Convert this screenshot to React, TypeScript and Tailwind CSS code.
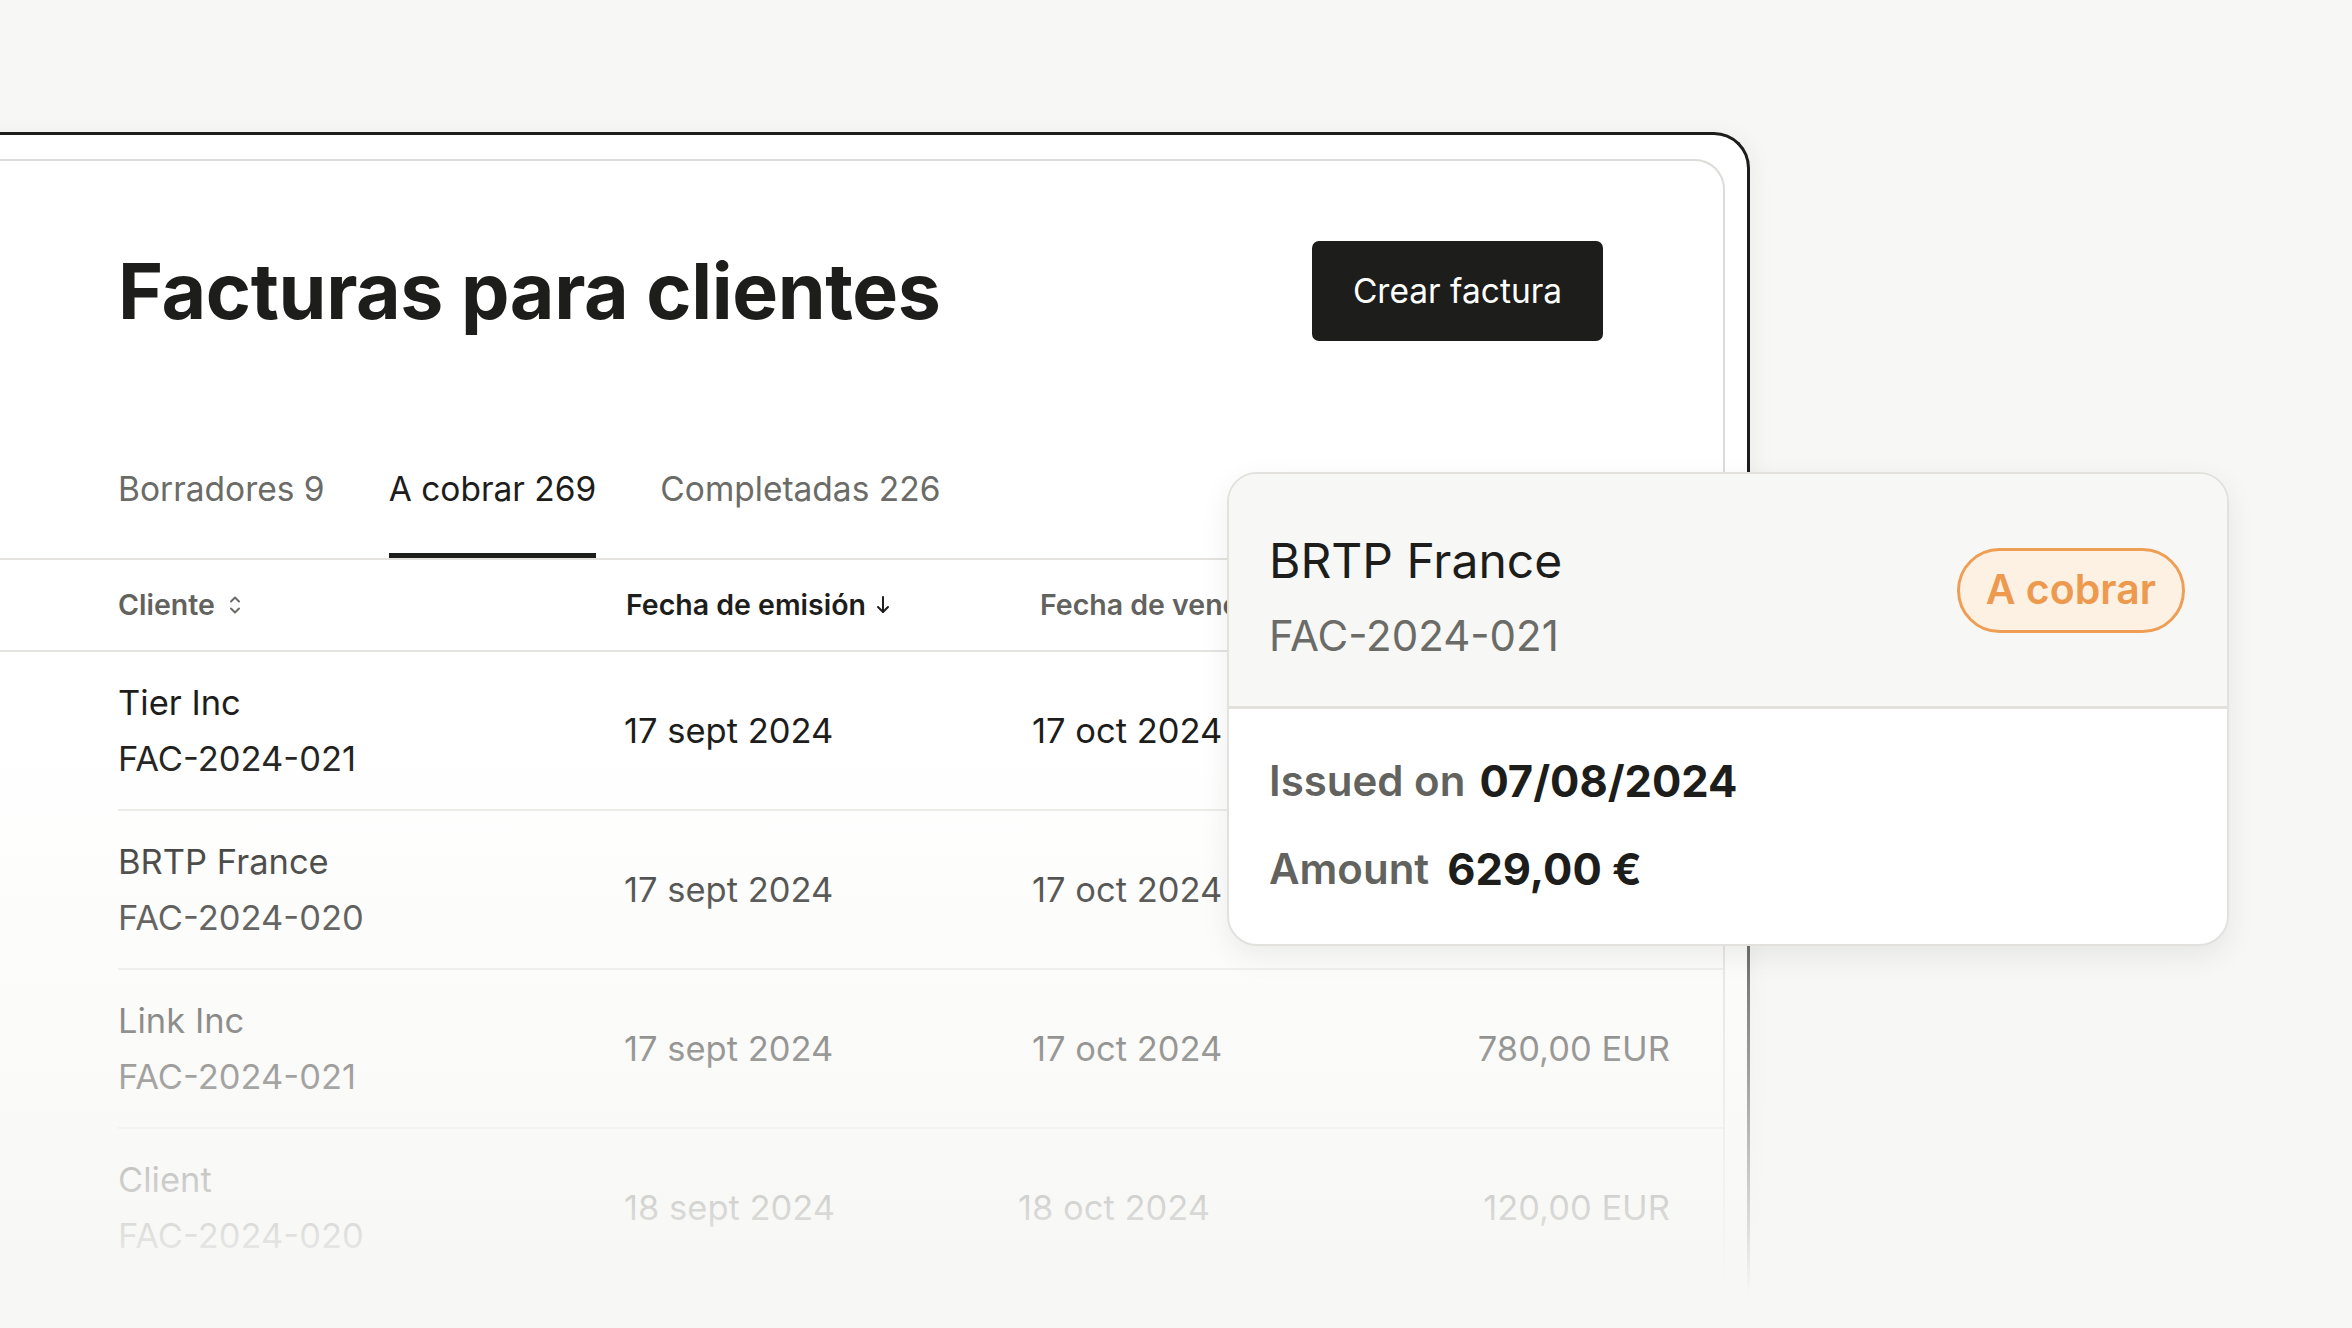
const rows = [
  { name: 'Tier Inc', id: 'FAC-2024-021', issued: '17 sept 2024', due: '17 oct 2024', amount: '1 250,00 EUR' },
  { name: 'BRTP France', id: 'FAC-2024-020', issued: '17 sept 2024', due: '17 oct 2024', amount: '629,00 EUR' },
  { name: 'Link Inc', id: 'FAC-2024-021', issued: '17 sept 2024', due: '17 oct 2024', amount: '780,00 EUR' },
  { name: 'Client', id: 'FAC-2024-020', issued: '18 sept 2024', due: '18 oct 2024', amount: '120,00 EUR' },
];

const tabs = [
  { label: 'Borradores 9', active: false },
  { label: 'A cobrar 269', active: true },
  { label: 'Completadas 226', active: false },
];

function SortIcon() {
  return (
    <svg width="12" height="20" viewBox="0 0 12 20" fill="none" stroke="#6b6b67" strokeWidth="2" strokeLinecap="round" strokeLinejoin="round">
      <path d="M2 6.5 6 2.5 10 6.5" />
      <path d="M2 13.5 6 17.5 10 13.5" />
    </svg>
  );
}

function ArrowDown() {
  return (
    <svg width="14" height="18" viewBox="0 0 14 18" fill="none" stroke="#1d1d1b" strokeWidth="2" strokeLinecap="round" strokeLinejoin="round">
      <path d="M7 1v15" />
      <path d="M2 11l5 5 5-5" />
    </svg>
  );
}

function InvoicePopup() {
  return (
    <div className="absolute left-[1227px] top-[472px] flex h-[474px] w-[1002px] flex-col overflow-hidden rounded-[30px] border-2 border-[#e2e1dd] bg-white shadow-[0_10px_30px_rgba(0,0,0,0.07)]">
      <div className="flex h-[235px] items-center justify-between border-b-[3px] border-[#e2e1dd] bg-[#f7f7f5] pl-[40px] pr-[42px]">
        <div className="pt-[16px]">
          <div className="text-[48px] leading-[75px] text-[#1d1d1b]">BRTP France</div>
          <div className="text-[42px] leading-[75px] text-[#6b6b67]">FAC-2024-021</div>
        </div>
        <span className="flex h-[85px] items-center rounded-full border-[3px] border-[#ef9f55] bg-[#fdf1e4] px-[26px] text-[41px] font-semibold text-[#ee9a4e]">
          A cobrar
        </span>
      </div>
      <div className="flex-1 pl-[40px] pt-[28px] text-[42px] font-semibold leading-[88px]">
        <div className="flex gap-[14px]">
          <span className="text-[#62625e]">Issued on</span>
          <span className="text-[43.5px] font-bold text-[#1d1d1b]">07/08/2024</span>
        </div>
        <div className="flex gap-[18px]">
          <span className="text-[#62625e]">Amount</span>
          <span className="text-[43.5px] font-bold text-[#1d1d1b]">629,00 €</span>
        </div>
      </div>
    </div>
  );
}

export default function App() {
  return (
    <div className="relative h-[1328px] w-[2352px] overflow-hidden bg-[#f7f7f5] font-['Inter',sans-serif] text-[#1d1d1b]">
      <div className="ml-[-60px] mt-[132px] h-[1260px] w-[1810px] rounded-tr-[36px] border-r-[3px] border-t-[3px] border-[#1d1d1b] bg-white pr-[22px] pt-[24px] shadow-[6px_0_20px_rgba(0,0,0,0.04)]">
        <div className="h-full rounded-tr-[30px] border-r-2 border-t-2 border-[#dedcd8] bg-white">
          <div className="flex items-center justify-between pl-[178px] pr-[120px] pt-[80px]">
            <h1 className="text-[77px] font-bold leading-none tracking-[-0.005em]">Facturas para clientes</h1>
            <button className="flex h-[100px] w-[291px] items-center justify-center rounded-[7px] bg-[#1d1d1b] text-[33.5px] text-white">
              Crear factura
            </button>
          </div>

          <div className="mt-[128px] flex gap-[64px] border-b-2 border-[#e4e3e0] pl-[178px]">
            {tabs.map((t) => (
              <div
                key={t.label}
                className={
                  t.active
                    ? 'border-b-[5px] border-[#1d1d1b] pb-[44px] text-[33.5px] leading-[40px] text-[#1d1d1b]'
                    : 'border-b-[5px] border-transparent pb-[44px] text-[33.5px] leading-[40px] text-[#6b6b67]'
                }>
                {t.label}
              </div>
            ))}
          </div>

          <div className="grid h-[92px] grid-cols-[508px_414px_1fr_auto] items-center border-b-2 border-[#e4e3e0] pl-[178px] pr-[53px] text-[28.5px] font-semibold">
            <div className="flex items-center gap-[14px] text-[#62625e]">
              Cliente <SortIcon />
            </div>
            <div className="flex items-center gap-[10px] text-[#1d1d1b]">
              Fecha de emisión <ArrowDown />
            </div>
            <div className="text-[#62625e]">Fecha de vencimiento</div>
            <div className="text-right text-[#62625e]">Importe</div>
          </div>

          <div className="ml-[178px]">
            {rows.map((r, i) => (
              <div
                key={i}
                className="grid h-[159px] grid-cols-[508px_414px_1fr_auto] items-center border-b-2 border-[#ebeae7] pr-[53px] text-[34.5px] text-[#1d1d1b]">
                <div className="leading-[56px]">
                  <div>{r.name}</div>
                  <div>{r.id}</div>
                </div>
                <div className="-ml-[2px]">{r.issued}</div>
                <div className={i === 3 ? '-ml-[22px]' : '-ml-[8px]'}>{r.due}</div>
                <div className="text-right">{r.amount}</div>
              </div>
            ))}
          </div>
        </div>
      </div>

      <div className="pointer-events-none absolute left-0 top-[740px] h-[588px] w-full bg-linear-to-b from-[#f7f7f5]/0 to-[#f7f7f5] to-94%" />

      <InvoicePopup />
    </div>
  );
}
